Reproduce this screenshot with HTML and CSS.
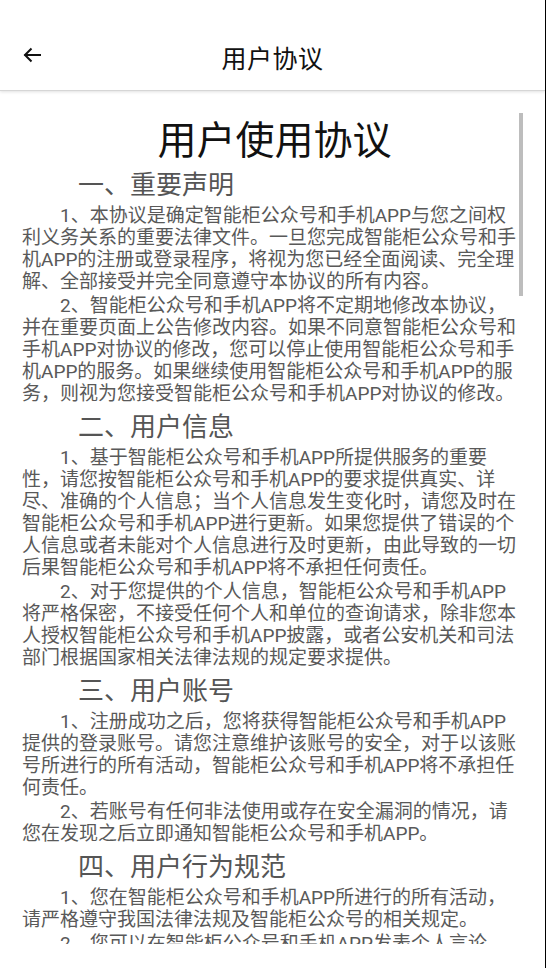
FILE: index.html
```html
<!DOCTYPE html>
<html lang="zh-CN">
<head>
<meta charset="utf-8">
<title>用户协议</title>
<link rel="stylesheet" href="styles.css">
</head>
<body>
<div class="screen">
  <header class="topbar">
    <button class="back" aria-label="返回">
      <svg width="18" height="16" viewBox="0 0 18 16" fill="none" stroke="#111" stroke-width="2" stroke-linecap="square">
        <path d="M17 8H2.5"/>
        <path d="M8.5 1.5L2 8l6.5 6.5" stroke-linecap="butt"/>
      </svg>
    </button>
    <h1 class="topbar-title">用户协议</h1>
  </header>
  <main class="content">
    <div class="scrollbar"></div>
    <h2 class="doc-title">用户使用协议</h2>

    <h3 class="sec">一、重要声明</h3>
    <p>1、本协议是确定智能柜公众号和手机APP与您之间权利义务关系的重要法律文件。一旦您完成智能柜公众号和手机APP的注册或登录程序，将视为您已经全面阅读、完全理解、全部接受并完全同意遵守本协议的所有内容。</p>
    <p>2、智能柜公众号和手机APP将不定期地修改本协议，并在重要页面上公告修改内容。如果不同意智能柜公众号和手机APP对协议的修改，您可以停止使用智能柜公众号和手机APP的服务。如果继续使用智能柜公众号和手机APP的服务，则视为您接受智能柜公众号和手机APP对协议的修改。</p>

    <h3 class="sec">二、用户信息</h3>
    <p>1、基于智能柜公众号和手机APP所提供服务的重要性，请您按智能柜公众号和手机APP的要求提供真实、详尽、准确的个人信息；当个人信息发生变化时，请您及时在智能柜公众号和手机APP进行更新。如果您提供了错误的个人信息或者未能对个人信息进行及时更新，由此导致的一切后果智能柜公众号和手机APP将不承担任何责任。</p>
    <p>2、对于您提供的个人信息，智能柜公众号和手机APP将严格保密，不接受任何个人和单位的查询请求，除非您本人授权智能柜公众号和手机APP披露，或者公安机关和司法部门根据国家相关法律法规的规定要求提供。</p>

    <h3 class="sec">三、用户账号</h3>
    <p>1、注册成功之后，您将获得智能柜公众号和手机APP提供的登录账号。请您注意维护该账号的安全，对于以该账号所进行的所有活动，智能柜公众号和手机APP将不承担任何责任。</p>
    <p>2、若账号有任何非法使用或存在安全漏洞的情况，请您在发现之后立即通知智能柜公众号和手机APP。</p>

    <h3 class="sec">四、用户行为规范</h3>
    <p>1、您在智能柜公众号和手机APP所进行的所有活动，请严格遵守我国法律法规及智能柜公众号的相关规定。</p>
    <p>2、您可以在智能柜公众号和手机APP发表个人言论，但不得发布任何违法、违规的内容。</p>
  </main>
</div>
</body>
</html>
```

FILE: styles.css
```css
* { box-sizing: border-box; }
html, body { margin: 0; padding: 0; background: #fff; }
body {
  font-family: Roboto, "Noto Sans CJK SC", "Noto Sans", sans-serif;
}
.screen {
  width: 546px;
  height: 968px;
  border-right: 1px solid #000;
  overflow: hidden;
  background: #fff;
}
.topbar {
  position: relative;
  height: 91px;
  display: flex;
  align-items: center;
  justify-content: center;
  background: #fff;
  border-bottom: 1px solid #d6d6d6;
  box-shadow: 0 1px 3px rgba(0,0,0,0.12);
  z-index: 2;
}
.back {
  position: absolute;
  left: 23px;
  top: 47px;
  padding: 0;
  border: 0;
  background: none;
  line-height: 0;
}
.topbar-title {
  margin: 24px 0 0;
  font-size: 25px;
  font-weight: 400;
  color: #111;
  letter-spacing: 0.5px;
}
.content {
  position: relative;
  height: 853px;
  overflow: hidden;
  padding: 27px 26px 0 22px;
}
.scrollbar {
  position: absolute;
  left: 519px;
  top: 22px;
  width: 4px;
  height: 183px;
  background: #bdbdbd;
}
.doc-title {
  margin: 0;
  padding-left: 8px;
  text-align: center;
  font-size: 39px;
  line-height: 47px;
  font-weight: 400;
  color: #111;
}
.sec {
  margin: 0;
  padding-left: 56px;
  font-size: 26px;
  line-height: 40px;
  font-weight: 400;
  color: #555;
}
.content p {
  margin: 0 0 2px;
  font-size: 19px;
  line-height: 22px;
  color: #595959;
  text-indent: 2em;
}
```
